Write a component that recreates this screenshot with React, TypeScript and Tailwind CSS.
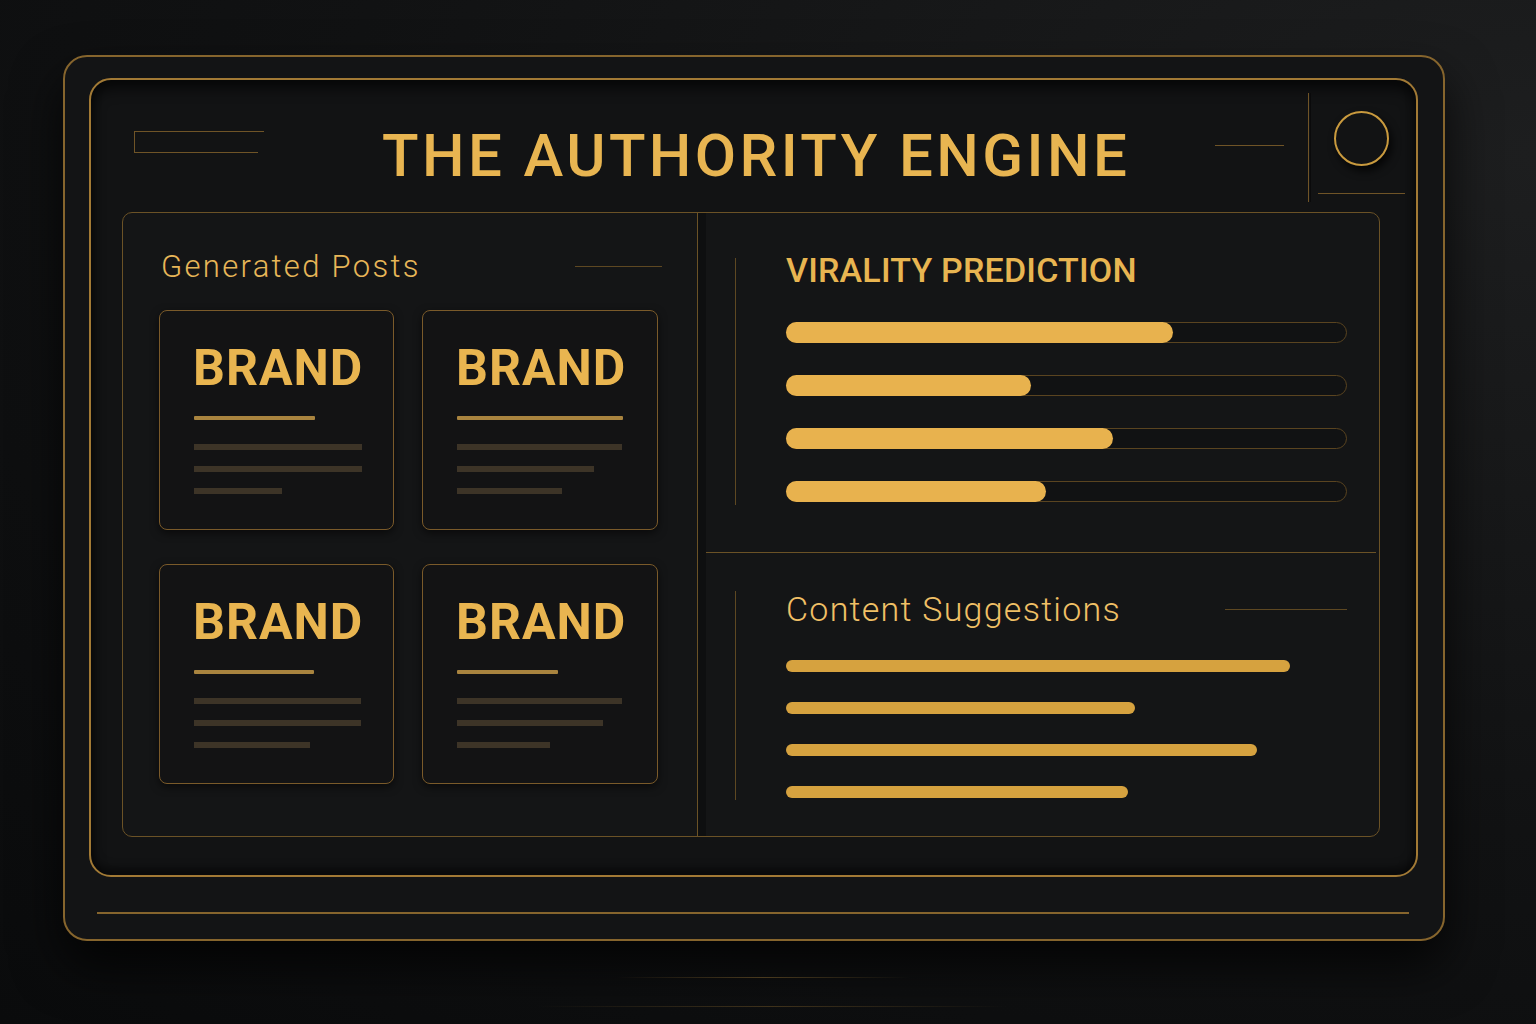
import React from "react";

const cards = [
  { accent: 121, lines: [168, 168, 88] },
  { accent: 166, lines: [165, 137, 105] },
  { accent: 120, lines: [167, 167, 116] },
  { accent: 101, lines: [165, 146, 93] },
];

const virality = [387, 245, 327, 260];
const suggestions = [504, 349, 471, 342];

function PostCard({ accent, lines }: { accent: number; lines: number[] }) {
  return (
    <div className="h-[220px] rounded-[8px] border border-[#7a5a2a] bg-[#131314] pl-[34px] pt-[32px] shadow-[0_3px_8px_rgba(0,0,0,0.55)]">
      <div className="-ml-[1px] text-[50px] font-bold leading-none tracking-[1px] text-[#e9b550]">
        BRAND
      </div>
      <div className="mt-[23px] h-[4px] rounded-[1px] bg-[#a9843f]" style={{ width: accent }} />
      <div className="mt-[24px] flex flex-col gap-[16px]">
        {lines.map((w, i) => (
          <div key={i} className="h-[6px] bg-[#3d3427]" style={{ width: w }} />
        ))}
      </div>
    </div>
  );
}

export default function App() {
  return (
    <div className="h-[1024px] w-full overflow-hidden bg-[radial-gradient(ellipse_at_100%_15%,#1d1e1f,#111213_55%,#0a0b0c)] pl-[63px] pt-[55px] font-['Roboto',sans-serif]">
      {/* outer frame */}
      <div className="h-[886px] w-[1382px] rounded-[24px] border-2 border-[#86652d] bg-[#131415] shadow-[0_24px_50px_rgba(0,0,0,0.75)]">
        {/* inner frame */}
        <div className="ml-[24px] mt-[21px] h-[799px] w-[1329px] rounded-[22px] border-2 border-[#a27a35] bg-[#121314] shadow-[inset_0_8px_14px_rgba(0,0,0,0.65),inset_0_-6px_10px_rgba(0,0,0,0.5)]">
          {/* header */}
          <div className="flex h-[132px] items-start">
            <div className="ml-[43px] mt-[51px] flex w-[130px] flex-col">
              <div className="h-[22px] w-[130px] border-l border-t border-[#6f5427]" />
              <div className="-mt-px h-px w-[124px] bg-[#6f5427]" />
            </div>
            <h1 className="ml-[118px] mt-[46px] text-[60px] font-medium leading-none tracking-[3.4px] text-[#e8b551]">
              THE AUTHORITY ENGINE
            </h1>
            <div className="ml-auto flex items-start pr-[11px]">
              <div className="mt-[65px] h-px w-[69px] bg-[#6f5427]" />
              <div className="ml-[24px] mt-[13px] h-[109px] w-px bg-[#6f5427] shadow-[2px_0_0_#0a0a0b]" />
              <div className="ml-[9px] flex w-[87px] flex-col items-center">
                <div className="mt-[31px] h-[55px] w-[55px] rounded-full border-2 border-[#c99a3e] shadow-[3px_5px_8px_rgba(0,0,0,0.75)]" />
                <div className="mt-[27px] h-px w-[87px] bg-[#6f5427]" />
              </div>
            </div>
          </div>

          {/* content panel */}
          <div className="ml-[31px] flex h-[625px] w-[1258px] overflow-hidden rounded-[10px] border border-[#6b5226] bg-[#141516]">
            {/* generated posts */}
            <div className="w-[575px] border-r border-[#6b5226] pl-[36px] pt-[38px]">
              <div className="flex items-center justify-between pr-[35px]">
                <span className="ml-[2px] text-[31px] font-light leading-none tracking-[2.3px] text-[#e7b658]">
                  Generated Posts
                </span>
                <div className="h-px w-[87px] bg-[#5e4822]" />
              </div>
              <div className="mt-[28px] grid grid-cols-[235px_236px] gap-x-[28px] gap-y-[34px]">
                {cards.map((c, i) => (
                  <PostCard key={i} accent={c.accent} lines={c.lines} />
                ))}
              </div>
            </div>

            <div className="w-[8px] bg-[#0e0f10]" />

            {/* right column */}
            <div className="flex flex-1 flex-col">
              <div className="flex h-[339px] items-start pl-[29px]">
                <div className="mt-[45px] h-[247px] w-px bg-[#5e4822]" />
                <div className="ml-[50px] w-[561px] pt-[40px]">
                  <h2 className="text-[34px] font-medium leading-none tracking-[0.2px] text-[#e8b551]">
                    VIRALITY PREDICTION
                  </h2>
                  <div className="mt-[35px] flex flex-col gap-[32px]">
                    {virality.map((w, i) => (
                      <div key={i} className="h-[21px] rounded-full border border-[#5a4420] bg-[#111213]">
                        <div className="-m-px h-[21px] rounded-full bg-[#e8b24e]" style={{ width: w }} />
                      </div>
                    ))}
                  </div>
                </div>
              </div>

              <div className="mr-[3px] h-px bg-[#6b5226]" />

              <div className="flex flex-1 items-start pl-[29px]">
                <div className="mt-[38px] h-[209px] w-px bg-[#5e4822]" />
                <div className="ml-[50px] w-[561px] pt-[39px]">
                  <div className="flex items-center justify-between">
                    <span className="text-[34px] font-light leading-none tracking-[1.25px] text-[#f0c066]">
                      Content Suggestions
                    </span>
                    <div className="h-px w-[122px] bg-[#5e4822]" />
                  </div>
                  <div className="mt-[34px] flex flex-col gap-[30px]">
                    {suggestions.map((w, i) => (
                      <div key={i} className="h-[12px] rounded-full bg-[#d6a23f]" style={{ width: w }} />
                    ))}
                  </div>
                </div>
              </div>
            </div>
          </div>
        </div>

        <div className="ml-[32px] mt-[35px] h-[2px] w-[1312px] bg-[#86652d]" />
      </div>

      <div className="ml-[554px] mt-[36px] h-px w-[293px] bg-linear-to-r from-transparent via-[#4a3a1e] to-transparent" />
      <div className="ml-[474px] mt-[28px] h-px w-[470px] bg-linear-to-r from-transparent via-[#3f321b] to-transparent" />
    </div>
  );
}
